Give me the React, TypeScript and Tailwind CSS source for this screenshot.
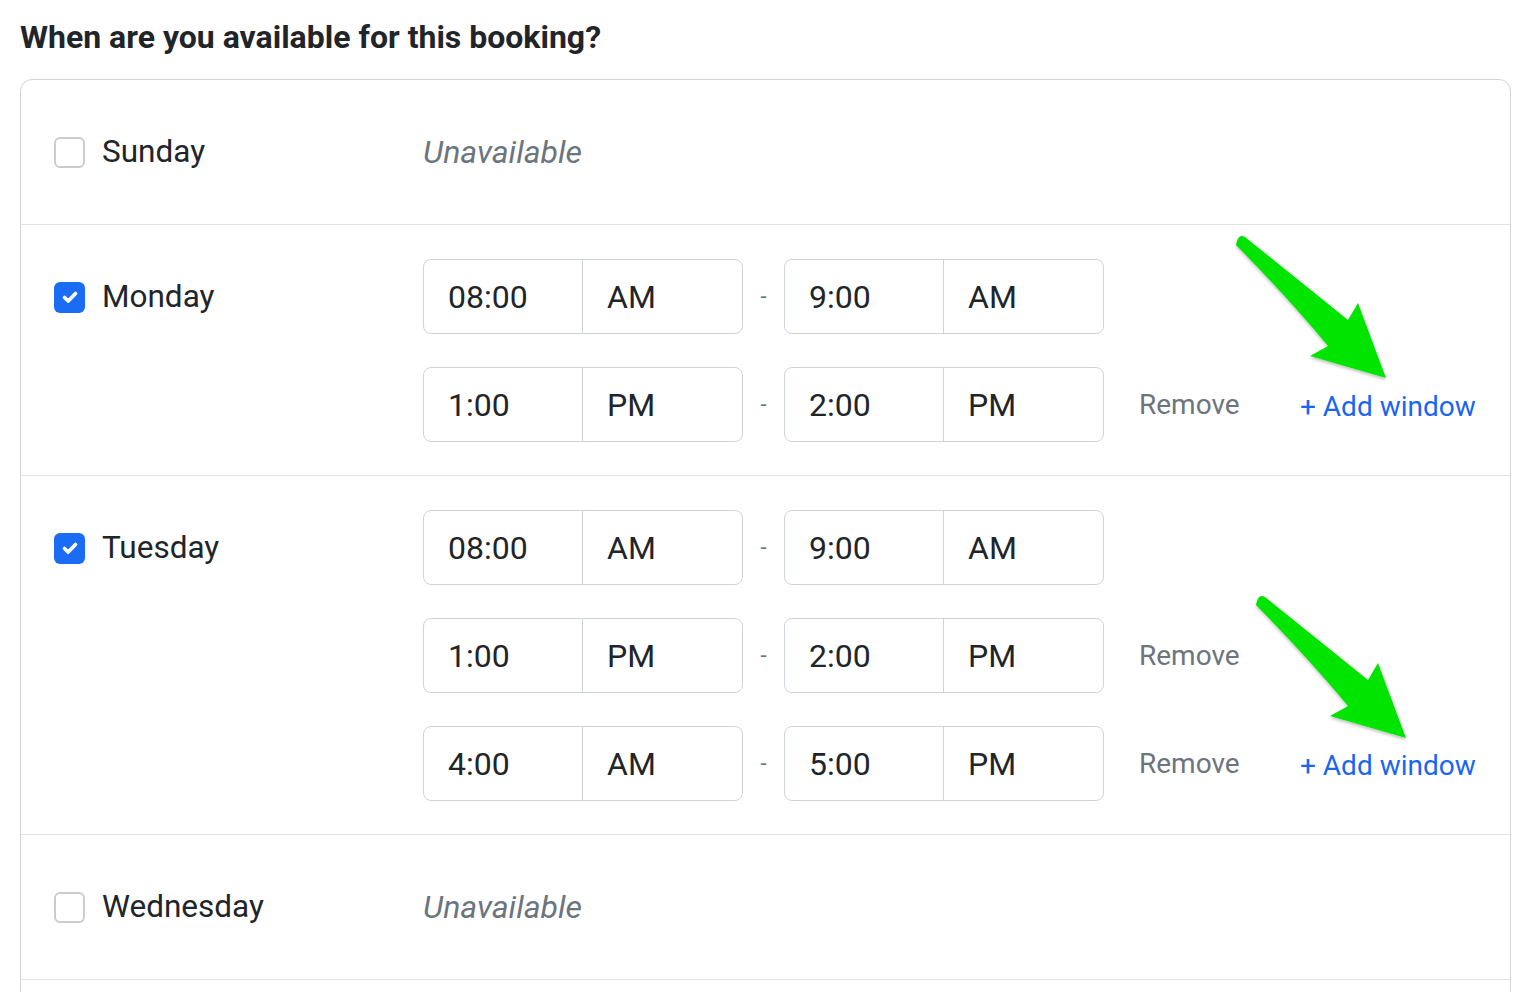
import React from 'react';

type Slot = { from: string; fromAmPm: string; to: string; toAmPm: string };

interface Day {
  name: string;
  enabled: boolean;
  slots: Slot[];
}

const days: Day[] = [
  { name: 'Sunday', enabled: false, slots: [] },
  {
    name: 'Monday',
    enabled: true,
    slots: [
      { from: '08:00', fromAmPm: 'AM', to: '9:00', toAmPm: 'AM' },
      { from: '1:00', fromAmPm: 'PM', to: '2:00', toAmPm: 'PM' },
    ],
  },
  {
    name: 'Tuesday',
    enabled: true,
    slots: [
      { from: '08:00', fromAmPm: 'AM', to: '9:00', toAmPm: 'AM' },
      { from: '1:00', fromAmPm: 'PM', to: '2:00', toAmPm: 'PM' },
      { from: '4:00', fromAmPm: 'AM', to: '5:00', toAmPm: 'PM' },
    ],
  },
  { name: 'Wednesday', enabled: false, slots: [] },
];

const Checkbox: React.FC<{ checked: boolean }> = ({ checked }) =>
  checked ? (
    <div className="w-[31px] h-[31px] rounded-[6px] bg-[#1a6cf5] flex items-center justify-center shrink-0">
      <svg width="20" height="20" viewBox="0 0 20 20" fill="none">
        <path d="M4.5 10.5l3.8 3.6L15.5 6.5" stroke="white" strokeWidth="3.6" strokeLinecap="round" strokeLinejoin="round" />
      </svg>
    </div>
  ) : (
    <div className="w-[31px] h-[31px] rounded-[6px] border-2 border-[#cccccc] bg-white shrink-0" />
  );

const TimeInput: React.FC<{ time: string; ampm: string }> = ({ time, ampm }) => (
  <div className="flex w-[320px] h-[75px] border-[1.5px] border-[#ced4da] rounded-[8px] text-[32px] text-[#212529]">
    <div className="w-[159px] border-r-[1.5px] border-[#ced4da] flex items-center pl-[24px]">{time}</div>
    <div className="flex-1 flex items-center pl-[24px]">{ampm}</div>
  </div>
);

const Arrow: React.FC<{ dx: number; dy: number }> = ({ dx, dy }) => (
  <g transform={`translate(${dx} ${dy})`}>
    <path
      d="M1236 245 Q1290 300 1328 346 L1310 356 L1386 378 L1358 303 L1348 320 Q1296 278 1245 237 Q1238 233 1236 245 Z"
      fill="#00e400"
      filter="url(#arrowShadow)"
    />
  </g>
);

const App: React.FC = () => {
  return (
    <div className="relative w-[1520px] h-[992px] overflow-hidden bg-white" style={{ fontFamily: 'Roboto, "Liberation Sans", sans-serif' }}>
      <div className="pl-[20px] pt-[16px]">
        <h2 className="text-[32px] font-bold leading-[42px] text-[#212529]">When are you available for this booking?</h2>
        <div className="mt-[21px] w-[1491px] border-[1.5px] border-[#d4d4d4] rounded-[12px]">
          {days.map((day, i) => (
            <div key={day.name} className={`flex px-[33px] py-[33px] ${i > 0 ? 'border-t-[1.5px] border-[#e0e3e6]' : ''}`}>
              <div className="w-[369px] h-[78px] flex items-center gap-[17px] shrink-0">
                <Checkbox checked={day.enabled} />
                <span className="text-[31.5px] text-[#212529]">{day.name}</span>
              </div>
              {day.slots.length === 0 ? (
                <div className="h-[78px] flex items-center text-[32px] italic text-[#6c757d]">Unavailable</div>
              ) : (
                <div className="flex flex-col gap-[33px] pt-[1px]">
                  {day.slots.map((slot, j) => (
                    <div key={j} className="flex items-center">
                      <TimeInput time={slot.from} ampm={slot.fromAmPm} />
                      <div className="w-[41px] text-center text-[22px] text-[#6c757d]">-</div>
                      <TimeInput time={slot.to} ampm={slot.toAmPm} />
                      <div className="w-[196px] pl-[35px] text-[28px] text-[#6c757d]">{j > 0 ? 'Remove' : ''}</div>
                      {j === day.slots.length - 1 && (
                        <div className="text-[28px] text-[#1a66f0] pt-[4px]">+ Add window</div>
                      )}
                    </div>
                  ))}
                </div>
              )}
            </div>
          ))}
          <div className="h-[40px] border-t-[1.5px] border-[#e0e3e6]" />
        </div>
      </div>
      <svg className="absolute inset-0 pointer-events-none" width="1520" height="992" viewBox="0 0 1520 992">
        <defs>
          <filter id="arrowShadow" x="-20%" y="-20%" width="140%" height="140%">
            <feDropShadow dx="0" dy="2" stdDeviation="1.5" floodColor="#000" floodOpacity="0.25" />
          </filter>
        </defs>
        <Arrow dx={0} dy={0} />
        <Arrow dx={20} dy={360} />
      </svg>
    </div>
  );
};

export default App;
